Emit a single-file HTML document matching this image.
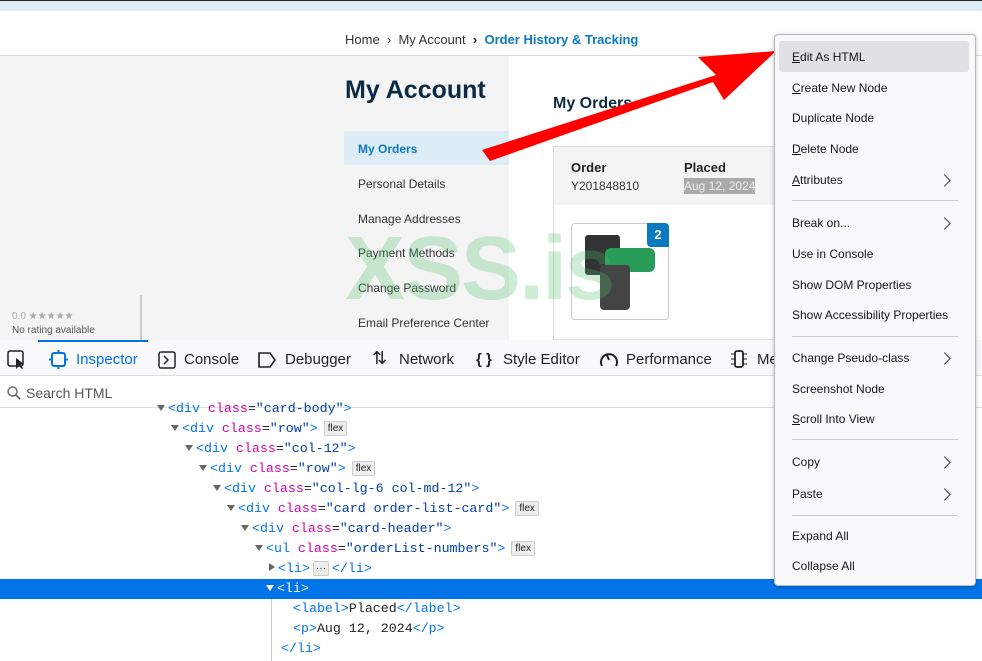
<!DOCTYPE html>
<html><head><meta charset="utf-8"><style>
*{margin:0;padding:0;box-sizing:border-box}
body{width:982px;height:661px;overflow:hidden;position:relative;background:#fff;font-family:"Liberation Sans",sans-serif}
.a{position:absolute}
.nav{font-size:13px;color:#333}
.side{font-size:12px;color:#333}
.tb span{position:absolute;top:351px;font-size:15px;color:#222}
.tree div{position:absolute;font-family:"Liberation Mono",monospace;font-size:13.3px;height:20px;line-height:20px;white-space:nowrap;color:#0074e8}
.p{color:#dd00a9}.s{color:#003eaa}.t{color:#222}
.tri{display:inline-block;width:0;height:0;border-left:4px solid transparent;border-right:4px solid transparent;border-top:6px solid #666;margin-right:3px;vertical-align:1px}
.fl{display:inline-block;font-family:"Liberation Sans",sans-serif;font-size:10px;color:#222;background:#eee;border:1px solid #ccc;border-radius:2px;padding:0 3px;line-height:13px;margin-left:6px;vertical-align:1px}
.menu{left:774px;top:34px;width:202px;height:552px;background:#f9f9fb;border:1px solid #b8b8b8;border-radius:4px;box-shadow:0 1px 4px rgba(0,0,0,.25)}
.menu div.i{position:absolute;left:17px;font-size:12px;color:#15141a}
.menu .ch{position:absolute;left:165px;width:9px;height:9px;border-right:1.5px solid #444;border-top:1.5px solid #444;transform:rotate(45deg)}
.menu .sep{position:absolute;left:17px;width:166px;height:1px;background:#ccc}
</style></head><body>
<div class="a" style="left:0;top:0;width:982px;height:1px;background:#222"></div>
<div class="a" style="left:0;top:1px;width:982px;height:10px;background:#dcedf5"></div>
<div class="a" style="left:0;top:55px;width:982px;height:285px;background:#f4f4f4;border-top:1px solid #ddd"></div>
<div class="a" style="left:509px;top:56px;width:473px;height:284px;background:#fff"></div>
<div class="a nav" style="left:345px;top:32px">Home &nbsp;›&nbsp; My Account &nbsp;<b style="color:#222">›</b>&nbsp; <b style="color:#0a7ac0">Order History &amp; Tracking</b></div>
<div class="a" style="left:345px;top:76px;font-size:25px;font-weight:bold;color:#0d2a45">My Account</div>
<div class="a" style="left:553px;top:95px;font-size:16px;font-weight:bold;color:#0d2a45">My Orders</div>
<div class="a" style="left:344px;top:131px;width:165px;height:34px;background:#dcedf5"></div>
<div class="a side" style="left:358px;top:142px;color:#0a7ac0;font-weight:bold">My Orders</div>
<div class="a side" style="left:358px;top:177px">Personal Details</div>
<div class="a side" style="left:358px;top:212px">Manage Addresses</div>
<div class="a side" style="left:358px;top:246px">Payment Methods</div>
<div class="a side" style="left:358px;top:281px">Change Password</div>
<div class="a side" style="left:358px;top:316px">Email Preference Center</div>
<div class="a" style="left:553px;top:146px;width:230px;height:194px;border:1px solid #ddd;background:#fff"></div>
<div class="a" style="left:554px;top:147px;width:228px;height:58px;background:#f4f4f4"></div>
<div class="a" style="left:571px;top:160px;font-size:13px;font-weight:bold;color:#222">Order</div>
<div class="a" style="left:571px;top:179px;font-size:12px;color:#333">Y201848810</div>
<div class="a" style="left:684px;top:160px;font-size:13px;font-weight:bold;color:#222">Placed</div>
<div class="a" style="left:684px;top:178px;font-size:12px;color:#eee;background:#aaa;padding:1px 0">Aug 12, 2024</div>
<div class="a" style="left:571px;top:223px;width:98px;height:97px;border:1px solid #ccc;border-radius:4px;background:#fff"></div>
<div class="a" style="left:585px;top:235px;width:35px;height:40px;background:#333;border-radius:3px"></div>
<div class="a" style="left:605px;top:248px;width:50px;height:24px;background:#2a9c5a;border-radius:6px"></div>
<div class="a" style="left:600px;top:265px;width:30px;height:45px;background:#444;border-radius:4px"></div>
<div class="a" style="left:647px;top:223px;width:22px;height:24px;background:#0a7ac0;color:#fff;font-size:13px;font-weight:bold;text-align:center;line-height:24px;border-radius:0 4px 0 4px">2</div>
<div class="a" style="left:345px;top:218px;font-size:90px;font-weight:bold;color:rgba(80,190,110,.28);letter-spacing:-2px">XSS.is</div>
<div class="a" style="left:0;top:295px;width:142px;height:45px;background:#f4f4f4;border-right:2px solid #ccc"></div>
<div class="a" style="left:12px;top:311px;font-size:10px;color:#aaa">0.0 ★★★★★</div>
<div class="a" style="left:12px;top:325px;font-size:10px;color:#555">No rating available</div>
<svg class="a" style="left:0;top:0" width="982" height="340"><polygon points="482,150 716,75 698,57 776,51 724,100 713,82 490,161" fill="#f00"/></svg>
<div class="a" style="left:0;top:340px;width:982px;height:36px;background:#f9f9fb;border-bottom:1px solid #ddd"></div>
<div class="a" style="left:38px;top:340px;width:110px;height:2px;background:#0074e8"></div>
<div class="tb">
<svg class="a" style="left:7px;top:350px" width="20" height="20"><rect x="1" y="1" width="15" height="15" rx="2" fill="none" stroke="#222" stroke-width="1.5"/><path d="M9 8 L9 19 L12 16 L15 19 L16 18 L13 15 L17 14 Z" fill="#222"/></svg>
<svg class="a" style="left:49px;top:350px" width="20" height="20"><rect x="3" y="3" width="13" height="13" rx="2" fill="none" stroke="#0074e8" stroke-width="2"/><path d="M9.5 0v3M9.5 16v3M0 9.5h3M16 9.5h3" stroke="#0074e8" stroke-width="2"/></svg>
<span style="left:76px;color:#0074e8">Inspector</span>
<svg class="a" style="left:158px;top:351px" width="18" height="18"><rect x="1" y="1" width="16" height="16" rx="2" fill="none" stroke="#222" stroke-width="1.5"/><path d="M6 5l4 4-4 4" fill="none" stroke="#222" stroke-width="1.5"/></svg>
<span style="left:184px">Console</span>
<svg class="a" style="left:257px;top:351px" width="20" height="18"><path d="M2 2h11l5 7-5 7H2z" fill="none" stroke="#222" stroke-width="1.6"/></svg>
<span style="left:285px">Debugger</span>
<span style="left:372px;font-size:18px;top:348px">⇅</span>
<span style="left:399px">Network</span>
<span style="left:476px;font-weight:bold">{ }</span>
<span style="left:503px">Style Editor</span>
<svg class="a" style="left:598px;top:349px" width="22" height="20"><path d="M4 17A8 8 0 1 1 18 17" fill="none" stroke="#222" stroke-width="2"/><path d="M11 11l-2-5" stroke="#222" stroke-width="2"/></svg>
<span style="left:626px">Performance</span>
<svg class="a" style="left:730px;top:349px" width="18" height="20"><rect x="5" y="2" width="8" height="16" rx="2" fill="none" stroke="#222" stroke-width="1.8"/><path d="M1 5h4M1 10h4M1 15h4M13 5h4M13 10h4M13 15h4" stroke="#222"/></svg>
<span style="left:757px">Me</span>
</div>
<svg class="a" style="left:7px;top:386px" width="14" height="14"><circle cx="5.5" cy="5.5" r="4.5" fill="none" stroke="#666" stroke-width="1.4"/><path d="M9 9l4 4" stroke="#666" stroke-width="1.6"/></svg>
<div class="a" style="left:26px;top:385px;font-size:14px;color:#555">Search HTML</div>
<div class="a" style="left:0;top:407px;width:982px;height:1px;background:#ddd"></div>
<div class="tree">
<div style="left:157px;top:399px"><span class="tri"></span>&lt;div <span class="p">class</span><span class="t">=</span><span class="s">"card-body"</span>&gt;</div>
<div style="left:171px;top:419px"><span class="tri"></span>&lt;div <span class="p">class</span><span class="t">=</span><span class="s">"row"</span>&gt;<span class="fl">flex</span></div>
<div style="left:185px;top:439px"><span class="tri"></span>&lt;div <span class="p">class</span><span class="t">=</span><span class="s">"col-12"</span>&gt;</div>
<div style="left:199px;top:459px"><span class="tri"></span>&lt;div <span class="p">class</span><span class="t">=</span><span class="s">"row"</span>&gt;<span class="fl">flex</span></div>
<div style="left:213px;top:479px"><span class="tri"></span>&lt;div <span class="p">class</span><span class="t">=</span><span class="s">"col-lg-6 col-md-12"</span>&gt;</div>
<div style="left:227px;top:499px"><span class="tri"></span>&lt;div <span class="p">class</span><span class="t">=</span><span class="s">"card order-list-card"</span>&gt;<span class="fl">flex</span></div>
<div style="left:241px;top:519px"><span class="tri"></span>&lt;div <span class="p">class</span><span class="t">=</span><span class="s">"card-header"</span>&gt;</div>
<div style="left:255px;top:539px"><span class="tri"></span>&lt;ul <span class="p">class</span><span class="t">=</span><span class="s">"orderList-numbers"</span>&gt;<span class="fl">flex</span></div>
<div style="left:269px;top:559px"><span class="tri" style="border:4px solid transparent;border-left:6px solid #666;border-right:0"></span>&lt;li&gt;<span class="fl" style="margin:0 3px;padding:0 2px">···</span>&lt;/li&gt;</div>
<div style="left:0;top:579px;width:982px;background:#0074e8;color:#fff;padding-left:266px"><span class="tri" style="border-top-color:#fff"></span>&lt;li&gt;</div>
<div style="left:293px;top:599px">&lt;label&gt;<span class="t">Placed</span>&lt;/label&gt;</div>
<div style="left:293px;top:619px">&lt;p&gt;<span class="t">Aug 12, 2024</span>&lt;/p&gt;</div>
<div style="left:281px;top:639px">&lt;/li&gt;</div>
</div>
<div class="a" style="left:271px;top:599px;width:1px;height:62px;background:#ccc"></div>
<div class="a menu">
<div class="a" style="left:4px;top:6px;width:190px;height:31px;background:#e0e0e6;border-radius:3px"></div>
<div class="i" style="top:15px"><u>E</u>dit As HTML</div>
<div class="i" style="top:46px"><u>C</u>reate New Node</div>
<div class="i" style="top:76px">Duplicate Node</div>
<div class="i" style="top:107px"><u>D</u>elete Node</div>
<div class="i" style="top:138px"><u>A</u>ttributes</div><div class="ch" style="top:141px"></div>
<div class="sep" style="top:165px"></div>
<div class="i" style="top:181px">Break on...</div><div class="ch" style="top:184px"></div>
<div class="i" style="top:212px">Use in Console</div>
<div class="i" style="top:243px">Show DOM Properties</div>
<div class="i" style="top:273px">Show Accessibility Properties</div>
<div class="sep" style="top:301px"></div>
<div class="i" style="top:316px">Change Pseudo-class</div><div class="ch" style="top:319px"></div>
<div class="i" style="top:347px">Screenshot Node</div>
<div class="i" style="top:377px"><u>S</u>croll Into View</div>
<div class="sep" style="top:404px"></div>
<div class="i" style="top:420px">Copy</div><div class="ch" style="top:423px"></div>
<div class="i" style="top:452px">Paste</div><div class="ch" style="top:455px"></div>
<div class="sep" style="top:480px"></div>
<div class="i" style="top:494px">Expand All</div>
<div class="i" style="top:524px">Collapse All</div>
</div>
</body></html>
